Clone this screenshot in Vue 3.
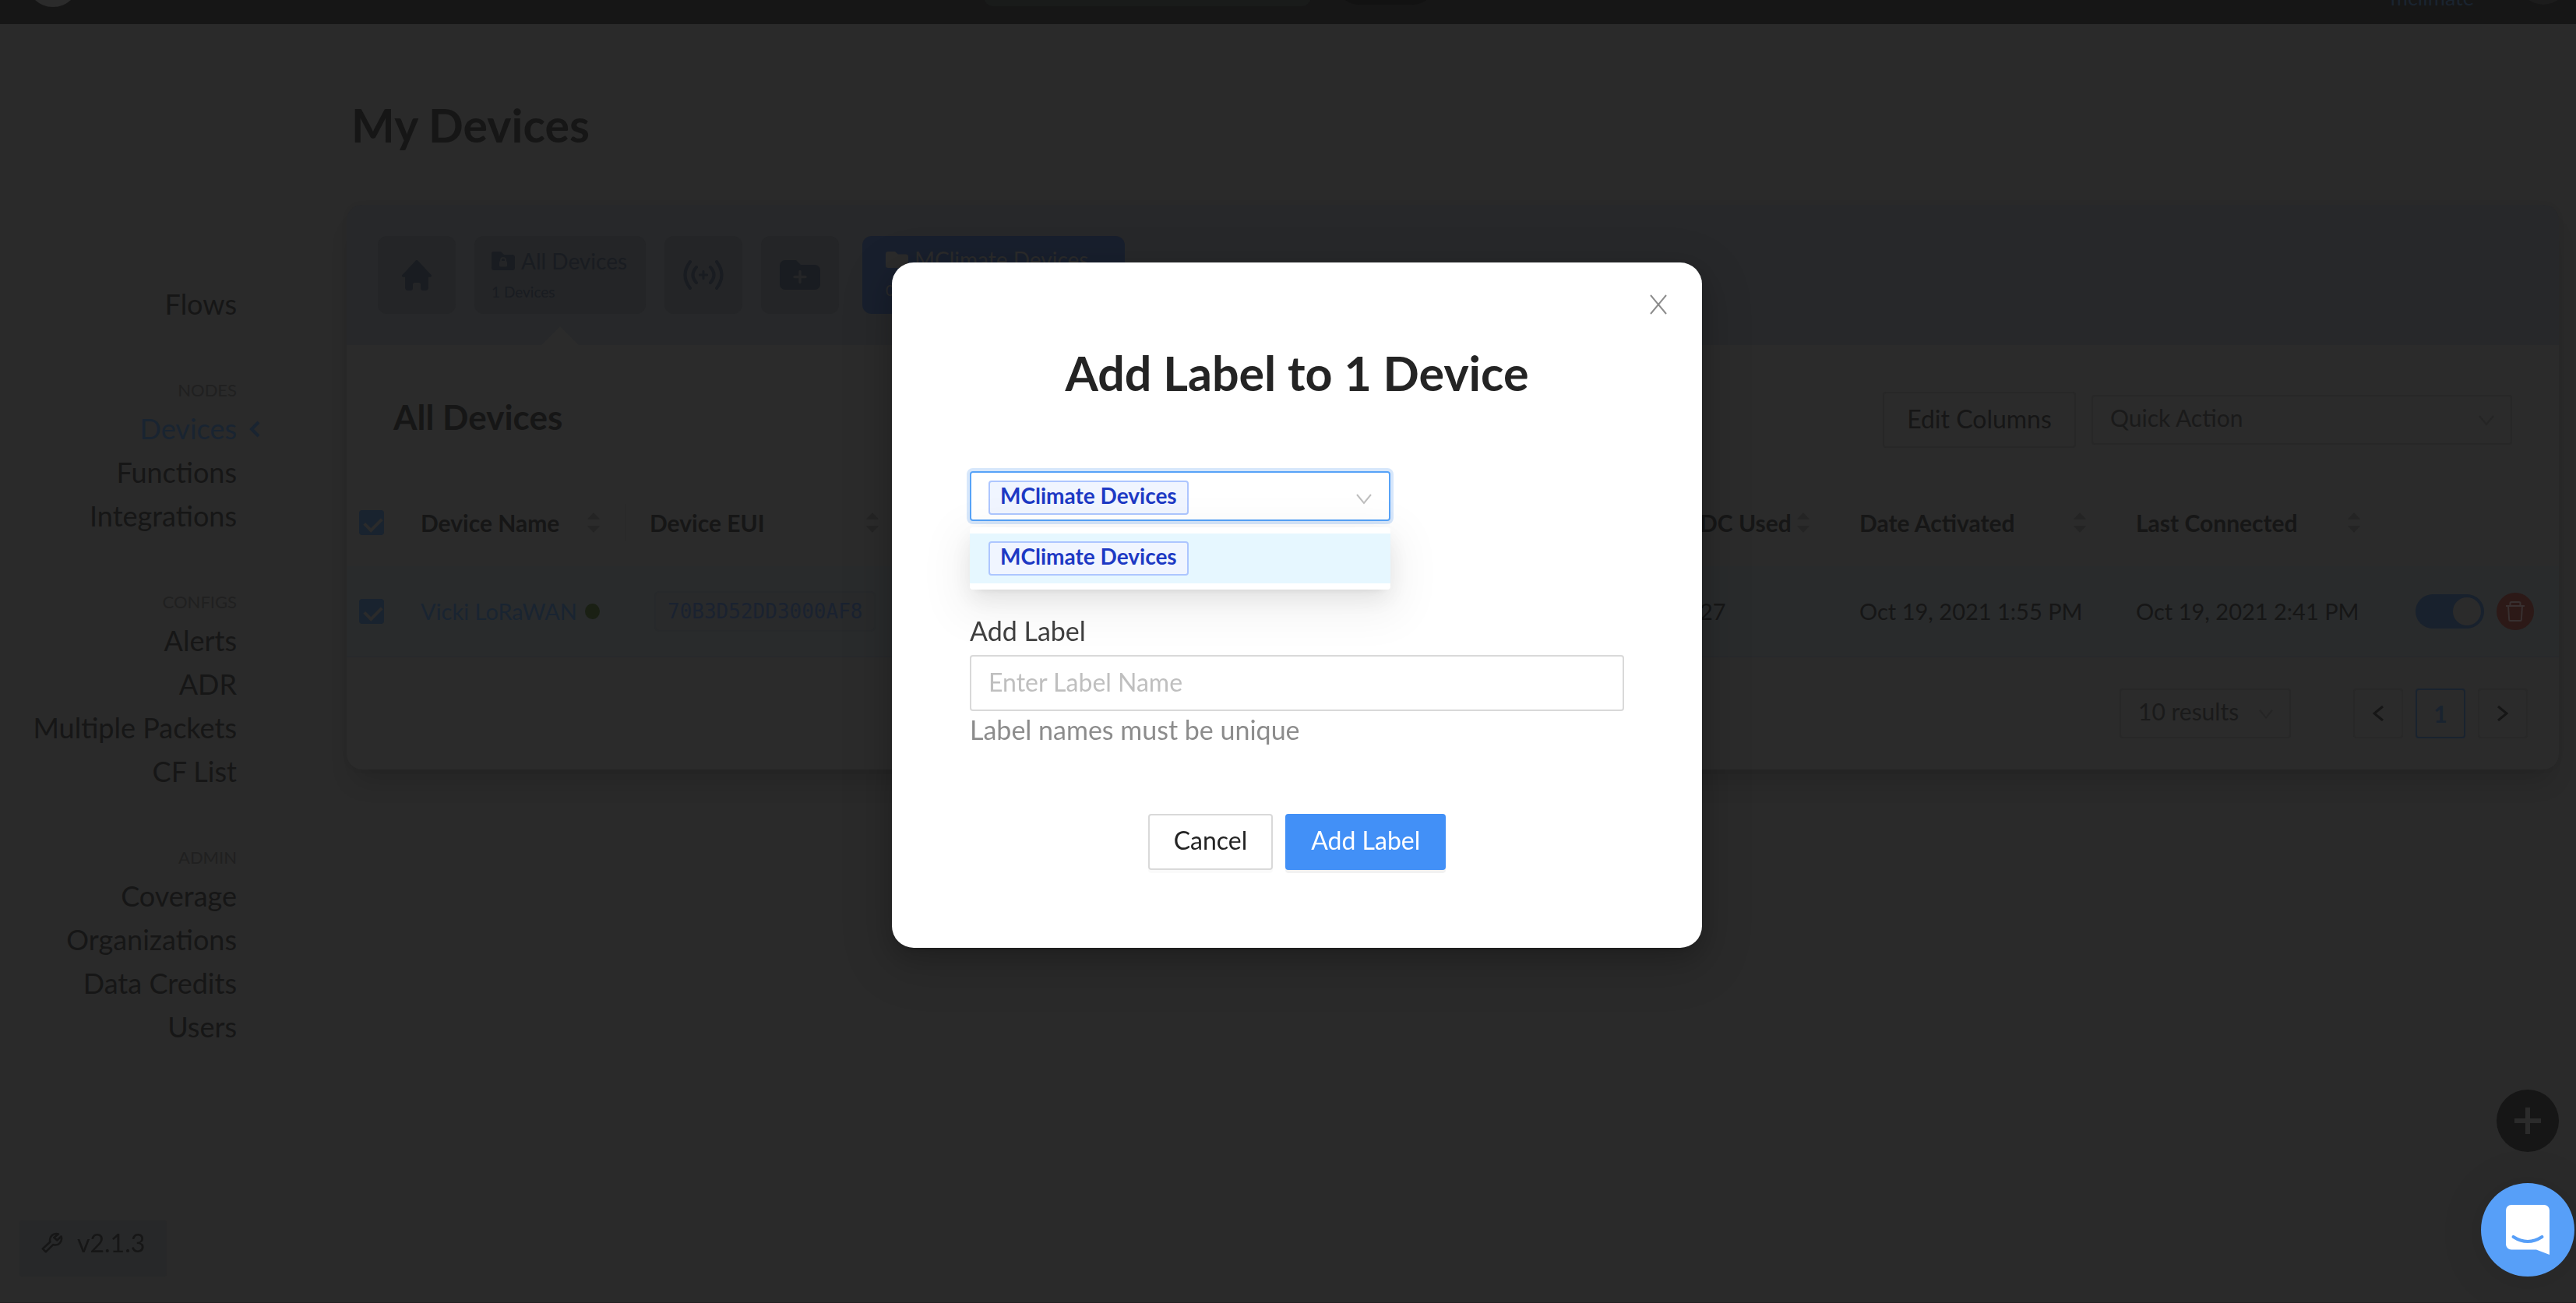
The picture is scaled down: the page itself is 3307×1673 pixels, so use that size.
<script setup>
import { ref } from 'vue'

const groups = [
  { label: '', items: ['Flows'] },
  { label: 'NODES', items: ['Devices', 'Functions', 'Integrations'] },
  { label: 'CONFIGS', items: ['Alerts', 'ADR', 'Multiple Packets', 'CF List'] },
  { label: 'ADMIN', items: ['Coverage', 'Organizations', 'Data Credits', 'Users'] },
]

const columns = [
  { key: 'name', title: 'Device Name', divided: true },
  { key: 'eui', title: 'Device EUI' },
  { key: 'spacer', title: '' },
  { key: 'dc', title: 'DC Used' },
  { key: 'activated', title: 'Date Activated' },
  { key: 'connected', title: 'Last Connected' },
]

const labels = ['MClimate Devices']
const selectedLabel = ref(labels[0])
const labelName = ref('')
</script>

<template>
  <div class="page">
    <header class="topbar">
      <span class="logo"></span>
      <span class="search"></span>
      <span class="pill"></span>
      <a href="#" class="account">mclimate</a>
      <span class="avatar"></span>
    </header>

    <div class="body">
      <nav class="sidebar">
        <section v-for="g in groups" :key="g.label" class="group">
          <h3 v-if="g.label">{{ g.label }}</h3>
          <a v-for="item in g.items" :key="item" href="#" :class="{ current: item === 'Devices' }">
            {{ item }}
            <svg v-if="item === 'Devices'" class="caret" width="14" height="22" viewBox="0 0 14 22">
              <path d="M12 2 3 11l9 9" fill="none" stroke="currentColor" stroke-width="4" />
            </svg>
          </a>
        </section>
      </nav>

      <main class="main">
        <h1>My Devices</h1>
        <div class="card">
          <div class="tabs">
            <button class="tile square" aria-label="Home">
              <svg width="40" height="40" viewBox="0 0 40 40">
                <path d="M20 1a2 2 0 0 1 1.500.7L38.500 20a1.600 1.600 0 0 1-1.200 2.700H35V36a4 4 0 0 1-4 4h-2.500a3.500 3.500 0 0 1-3.500-3.500V32a2 2 0 0 0-2-2h-6a2 2 0 0 0-2 2v4.500a3.500 3.500 0 0 1-3.500 3.500H9a4 4 0 0 1-4-4V22.700H2.700A1.600 1.600 0 0 1 1.500 20L18.500 1.700A2 2 0 0 1 20 1Z" fill="currentColor" />
              </svg>
            </button>
            <button class="tile wide active">
              <span class="tile-name">
                <svg width="30" height="24" viewBox="0 0 30 24">
                  <path d="M3 0h9l4 4h10.500A3.500 3.500 0 0 1 30 7.500v13a3.500 3.500 0 0 1-3.500 3.500h-23A3.500 3.500 0 0 1 0 20.500V3a3 3 0 0 1 3-3Z" fill="currentColor" />
                  <path d="M12 12v-1a3 3 0 0 1 6 0v1" fill="none" stroke="#242527" stroke-width="2" />
                  <rect x="10" y="12" width="10" height="7.500" rx="1.500" fill="#242527" />
                </svg>
                All Devices
              </span>
              <span class="tile-count">1 Devices</span>
            </button>
            <button class="tile square" aria-label="Add device">
              <svg width="54" height="40" viewBox="0 0 54 40" fill="none" stroke="currentColor" stroke-width="4" stroke-linecap="round">
                <path d="M10 3Q-3 20 10 37M44 3q13 17 0 34M18 10q-9 10 0 20M36 10q9 10 0 20" />
                <path d="M27 15.500v9M22.500 20h9" stroke-width="3" />
              </svg>
            </button>
            <button class="tile square" aria-label="Add label">
              <svg width="52" height="38" viewBox="0 0 52 38">
                <path d="M7 0h14l6 6h18a7 7 0 0 1 7 7v18a7 7 0 0 1-7 7H7a7 7 0 0 1-7-7V7a7 7 0 0 1 7-7Z" fill="currentColor" />
                <path d="M26 14.500v14M19 21.500h14" fill="none" stroke="#242527" stroke-width="3.500" stroke-linecap="round" />
              </svg>
            </button>
            <button class="tile label-tile">
              <span class="tile-name">
                <svg width="29" height="21" viewBox="0 0 29 21">
                  <path d="M3 0h9l4 3.500h10a3 3 0 0 1 3 3V18a3 3 0 0 1-3 3H3a3 3 0 0 1-3-3V3a3 3 0 0 1 3-3Z" fill="currentColor" />
                </svg>
                MClimate Devices
              </span>
              <span class="tile-count">0 Devices</span>
            </button>
          </div>

          <div class="card-head">
            <h2>All Devices</h2>
            <button class="edit">Edit Columns</button>
            <div class="select quick">
              <select aria-label="Quick Action">
                <option>Quick Action</option>
              </select>
              <svg width="20" height="14" viewBox="0 0 20 14">
                <path d="M1 1l9 11 9-11" fill="none" stroke="currentColor" stroke-width="2" />
              </svg>
            </div>
          </div>

          <table>
            <thead>
              <tr>
                <th class="col-check"><input type="checkbox" class="check" checked aria-label="Select all devices" /></th>
                <th v-for="c in columns" :key="c.key" :class="['col-' + c.key, { divided: c.divided }]">
                  <div v-if="c.title" class="th">
                    <span>{{ c.title }}</span>
                    <svg width="16" height="26" viewBox="0 0 16 26">
                      <path d="M8 0l8 9H0ZM8 26l8-9H0Z" fill="currentColor" />
                    </svg>
                  </div>
                </th>
                <th class="col-actions"></th>
              </tr>
            </thead>
            <tbody>
              <tr>
                <td class="col-check"><input type="checkbox" class="check" checked aria-label="Select Vicki LoRaWAN" /></td>
                <td><div class="device"><a href="#">Vicki LoRaWAN</a><span class="dot"></span></div></td>
                <td><code>70B3D52DD3000AF8</code></td>
                <td></td>
                <td>27</td>
                <td>Oct 19, 2021 1:55 PM</td>
                <td>Oct 19, 2021 2:41 PM</td>
                <td>
                  <div class="actions">
                    <input type="checkbox" role="switch" class="switch" checked aria-label="Device active" />
                    <button class="delete" aria-label="Delete device">
                      <svg width="26" height="28" viewBox="0 0 26 28" fill="none" stroke="currentColor" stroke-width="2">
                        <path d="M1 7h24M6.500 7V3.500A1.500 1.500 0 0 1 8 2h10a1.500 1.500 0 0 1 1.500 1.500V7M4 7l1.200 18a1 1 0 0 0 1 1h13.600a1 1 0 0 0 1-1L22 7" />
                      </svg>
                    </button>
                  </div>
                </td>
              </tr>
            </tbody>
          </table>

          <div class="pager">
            <div class="select size">
              <select aria-label="Results per page">
                <option>10 results</option>
              </select>
              <svg width="18" height="14" viewBox="0 0 20 14">
                <path d="M1 1l9 11 9-11" fill="none" stroke="currentColor" stroke-width="2" />
              </svg>
            </div>
            <button class="page-btn" aria-label="Previous page">
              <svg width="14" height="20" viewBox="0 0 14 20"><path d="M13 1 2 10l11 9" fill="none" stroke="currentColor" stroke-width="3" /></svg>
            </button>
            <button class="page-btn on">1</button>
            <button class="page-btn" aria-label="Next page">
              <svg width="14" height="20" viewBox="0 0 14 20"><path d="M1 1l11 9-11 9" fill="none" stroke="currentColor" stroke-width="3" /></svg>
            </button>
          </div>
        </div>
      </main>
    </div>

    <a href="#" class="version">
      <svg width="28" height="28" viewBox="0 0 28 28" fill="none" stroke="currentColor" stroke-width="2.500" stroke-linejoin="round">
        <path d="M22 3.500a8.200 8.200 0 0 0-10.600 10L1.800 22.300l4 4 9.400-9.200A8.200 8.200 0 0 0 25.500 6.500l-5.200 5-4-3.600Z" />
      </svg>
      v2.1.3
    </a>
    <button class="fab" aria-label="Add">
      <svg width="34" height="34" viewBox="0 0 34 34"><path d="M17 0v34M0 17h34" stroke="currentColor" stroke-width="6" /></svg>
    </button>

    <div class="overlay">
      <form class="modal" role="dialog" aria-labelledby="modal-title" @submit.prevent>
        <button type="button" class="close" aria-label="Close">
          <svg width="22" height="26" viewBox="0 0 22 26"><path d="M1 1l20 24M21 1 1 25" fill="none" stroke="currentColor" stroke-width="2" /></svg>
        </button>
        <h2 id="modal-title">Add Label to 1 Device</h2>
        <div class="picker">
          <button type="button" class="combo" role="combobox" aria-expanded="true" aria-controls="label-list" aria-label="Label">
            <span class="tag">{{ selectedLabel }}</span>
            <svg width="20" height="14" viewBox="0 0 20 14">
              <path d="M1 1l9 11 9-11" fill="none" stroke="currentColor" stroke-width="2" />
            </svg>
          </button>
          <ul id="label-list" class="options" role="listbox" aria-label="Labels">
            <li v-for="l in labels" :key="l" role="option" :aria-selected="l === selectedLabel" @click="selectedLabel = l">
              <span class="tag">{{ l }}</span>
            </li>
          </ul>
        </div>
        <label for="label-name">Add Label</label>
        <input id="label-name" v-model="labelName" type="text" placeholder="Enter Label Name" />
        <p>Label names must be unique</p>
        <div class="buttons">
          <button type="button" class="btn">Cancel</button>
          <button type="submit" class="btn primary">Add Label</button>
        </div>
      </form>
    </div>

    <button class="chat" aria-label="Open chat">
      <svg width="56" height="64" viewBox="0 0 56 64">
        <path d="M7 0h42a7 7 0 0 1 7 7v57l-17-6.500H7a7 7 0 0 1-7-7V7a7 7 0 0 1 7-7Z" fill="#fff" />
        <path d="M9.500 41q18.500 12 37 0" fill="none" stroke="#579ff8" stroke-width="4" stroke-linecap="round" />
      </svg>
    </button>
  </div>
</template>

<style>
body {
  background: #2a2a2a;
}
</style>

<style scoped>
.page {
  min-height: 100vh;
  box-sizing: border-box;
  border-bottom: 1px solid #221f20;
  background: #2a2a2a;
  color: #161616;
  font-family: Lato, "Liberation Sans", sans-serif;
}
.page * {
  box-sizing: border-box;
}
button,
input,
select {
  margin: 0;
  padding: 0;
  border: 0;
  background: none;
  color: inherit;
  font-family: inherit;
  appearance: none;
  outline: none;
}
a {
  color: inherit;
  text-decoration: none;
}
svg {
  display: block;
  flex: none;
}
h1,
h2,
h3,
p {
  margin: 0;
}

/* Top bar, scrolled mostly out of view */
.topbar {
  display: flex;
  align-items: flex-end;
  height: 31px;
  padding: 0 10px 0 34px;
  overflow: hidden;
  background: #161616;
}
.logo {
  width: 68px;
  height: 68px;
  margin-bottom: 22px;
  border-radius: 50%;
  background: #2b2b2b;
}
.search {
  width: 420px;
  height: 60px;
  margin: 0 32px 23px auto;
  border-radius: 12px;
  background: #191b1a;
}
.pill {
  width: 128px;
  height: 60px;
  margin: 0 auto 25px 0;
  border-radius: 30px;
  background: #121212;
}
.account {
  margin: 0 57px 18px 0;
  padding-left: 64px;
  color: #1a2430;
  font-size: 27px;
  line-height: 33px;
}
.avatar {
  width: 64px;
  height: 64px;
  margin-bottom: 25px;
  border-radius: 50%;
  background: #1c1c1c;
}

.body {
  display: flex;
}

/* Sidebar */
.sidebar {
  flex: none;
  width: 445px;
  padding: 331px 141px 0 0;
  text-align: right;
}
.group + .group {
  margin-top: 62px;
}
.group h3 {
  color: #202020;
  font-size: 22px;
  font-weight: 400;
  line-height: 42px;
}
.group a {
  position: relative;
  display: block;
  font-size: 36px;
  line-height: 56px;
}
.group .current {
  color: #192431;
}
.caret {
  position: absolute;
  left: calc(100% + 16px);
  top: 18px;
}

/* Main card */
.main {
  flex: 1;
  min-width: 0;
  padding: 90px 22px 0 0;
}
h1 {
  padding-left: 6px;
  font-size: 59px;
  font-weight: 700;
  line-height: 80px;
}
.card {
  margin-top: 62px;
  border-radius: 20px;
  background: #2b2b2b;
  box-shadow: 0 24px 32px -10px rgba(0, 0, 0, 0.14), 0 0 8px rgba(0, 0, 0, 0.04);
}
.tabs {
  display: flex;
  gap: 24px;
  padding: 40px;
  border-radius: 20px 20px 0 0;
  background: #27282a;
}
.tile {
  position: relative;
  height: 100px;
  border-radius: 12px;
  background: #242527;
  color: #191c21;
  text-align: left;
}
.square {
  display: flex;
  flex: none;
  align-items: center;
  justify-content: center;
  width: 100px;
}
.wide {
  width: 220px;
  padding: 12px 22px 8px;
}
.active::after {
  position: absolute;
  top: 116px;
  left: 50%;
  margin-left: -24px;
  border: 24px solid transparent;
  border-top-width: 0;
  border-bottom-color: #2b2b2b;
  content: "";
}
.tile-name {
  display: flex;
  align-items: center;
  gap: 8px;
  font-size: 28px;
  line-height: 40px;
  white-space: nowrap;
}
.tile-count {
  display: block;
  font-size: 19px;
  line-height: 40px;
}
.label-tile {
  width: 337px;
  margin-left: 6px;
  padding: 8px 30px;
  background: #181f2d;
  color: #2b2b2b;
}
.card-head {
  display: flex;
  align-items: center;
  gap: 20px;
  padding: 60px 60px 40px;
}
.card-head h2 {
  align-self: flex-start;
  margin-right: auto;
  font-size: 44px;
  font-weight: 700;
  line-height: 64px;
}
.edit {
  width: 248px;
  height: 72px;
  padding-bottom: 4px;
  border: 2px solid #272727;
  border-radius: 4px;
  font-size: 32px;
}
.select {
  position: relative;
  height: 64px;
}
.select select {
  width: 100%;
  height: 100%;
  padding: 0 22px 6px;
  border: 2px solid #272727;
  border-radius: 4px;
  color: #1a1a1a;
  font-size: 30px;
}
.select svg {
  position: absolute;
  top: 26px;
  right: 23px;
  color: #252525;
  pointer-events: none;
}
.quick {
  width: 540px;
}
.size {
  width: 220px;
  margin-right: 64px;
}

/* Device table */
table {
  width: 100%;
  border-collapse: collapse;
  table-layout: fixed;
  font-size: 29px;
}
th,
td {
  padding: 0 34px 0 30px;
  text-align: left;
  white-space: nowrap;
}
th {
  height: 112px;
  font-size: 30px;
  font-weight: 700;
}
td {
  height: 116px;
  border-bottom: 2px solid #27292c;
  background: #292b2c;
}
.divided {
  background: linear-gradient(#292929, #292929) right center / 2px 48px no-repeat;
}
.th {
  display: flex;
  align-items: center;
  justify-content: space-between;
}
.th svg {
  color: #242424;
}
.col-check {
  width: 65px;
  padding: 0 0 0 16px;
}
.col-name {
  width: 294px;
}
.col-eui {
  width: 358px;
}
.col-dc {
  width: 205px;
}
.col-activated {
  width: 355px;
}
.col-connected {
  width: 352px;
}
.col-actions {
  width: 221px;
}
.check {
  position: relative;
  display: block;
  width: 32px;
  height: 32px;
  border-radius: 4px;
  background: #19232f;
}
.check::after {
  position: absolute;
  top: 5px;
  left: 11px;
  width: 10px;
  height: 18px;
  border: solid #2b2b2b;
  border-width: 0 4px 4px 0;
  transform: rotate(45deg);
  content: "";
}
.device {
  display: flex;
  align-items: center;
  gap: 10px;
  color: #192431;
}
.dot {
  width: 20px;
  height: 20px;
  border-radius: 50%;
  background: #1a2014;
}
code {
  display: inline-block;
  margin-left: 6px;
  padding: 0 15px;
  border: 2px solid #27292b;
  border-radius: 6px;
  background: #292a2b;
  color: #1a2230;
  font-family: "DejaVu Sans Mono", monospace;
  font-size: 26px;
  line-height: 48px;
}
.actions {
  display: flex;
  align-items: center;
  gap: 16px;
  margin-left: 7px;
}
.switch {
  position: relative;
  width: 88px;
  height: 44px;
  border-radius: 22px;
  background: #18212d;
}
.switch::after {
  position: absolute;
  top: 4px;
  right: 4px;
  width: 36px;
  height: 36px;
  border-radius: 50%;
  background: #2b2b2b;
  content: "";
}
.delete {
  display: flex;
  align-items: center;
  justify-content: center;
  width: 48px;
  height: 48px;
  border-radius: 50%;
  background: #2c1917;
  color: #383030;
}
.col-actions,
td:last-child {
  padding-right: 0;
}
.pager {
  display: flex;
  justify-content: flex-end;
  gap: 16px;
  padding: 40px;
}
.page-btn {
  display: flex;
  align-items: center;
  justify-content: center;
  width: 64px;
  height: 64px;
  border: 2px solid #282828;
  border-radius: 4px;
  font-size: 30px;
}
.page-btn.on {
  border-color: #19232f;
  color: #19232f;
  font-weight: 700;
}

/* Floating corners */
.version {
  position: fixed;
  bottom: 34px;
  left: 25px;
  display: flex;
  gap: 18px;
  height: 72px;
  padding: 0 28px;
  border-radius: 4px;
  background: #272829;
  font-size: 32px;
  line-height: 58px;
}
.version svg {
  margin-top: 14px;
}
.fab {
  position: fixed;
  right: 22px;
  bottom: 194px;
  display: flex;
  align-items: center;
  justify-content: center;
  width: 80px;
  height: 80px;
  border-radius: 50%;
  background: #161616;
  color: #2b2b2b;
}
.chat {
  position: fixed;
  right: 2px;
  bottom: 34px;
  display: flex;
  align-items: center;
  justify-content: center;
  width: 120px;
  height: 120px;
  border-radius: 50%;
  background: #579ff8;
  box-shadow: 0 4px 60px rgba(0, 0, 0, 0.1);
}

/* Modal */
.overlay {
  position: fixed;
  inset: 0;
  display: flex;
  align-items: flex-start;
  justify-content: center;
  padding: 337px 0 0 23px;
}
.modal {
  position: relative;
  width: 1040px;
  padding: 100px;
  border-radius: 28px;
  background: #fff;
  box-shadow: 0 6px 12px -8px rgba(0, 0, 0, 0.24), 0 12px 32px rgba(0, 0, 0, 0.16), 0 18px 56px 16px rgba(0, 0, 0, 0.1);
}
.close {
  position: absolute;
  top: 41px;
  right: 45px;
  color: #8c8c8c;
}
.modal h2 {
  color: #242424;
  font-size: 61px;
  font-weight: 700;
  line-height: 84px;
  text-align: center;
}
.picker {
  position: relative;
  width: 540px;
  margin: 84px 0 112px;
}
.combo {
  display: flex;
  align-items: center;
  justify-content: space-between;
  width: 100%;
  height: 64px;
  padding: 4px 22px 0;
  border: 2px solid #57a3f8;
  border-radius: 4px;
  color: #bfbfbf;
  box-shadow: 0 0 0 4px #d7e7fb;
}
.combo svg {
  margin-top: 4px;
}
.options {
  position: absolute;
  top: 72px;
  left: 0;
  right: 0;
  margin: 0;
  padding: 8px 0;
  border-radius: 4px;
  background: #fff;
  list-style: none;
  box-shadow: 0 6px 12px -8px rgba(0, 0, 0, 0.12), 0 12px 32px rgba(0, 0, 0, 0.08), 0 18px 56px 16px rgba(0, 0, 0, 0.05);
}
.options li {
  display: flex;
  padding: 10px 24px;
  background: #e6f7ff;
}
.tag {
  height: 44px;
  padding: 0 13px;
  border: 2px solid #adc6ff;
  border-radius: 4px;
  background: #f0f5ff;
  color: #1d39c4;
  font-size: 28px;
  font-weight: 700;
  line-height: 35px;
  white-space: nowrap;
}
.modal label {
  display: block;
  color: #404040;
  font-size: 34px;
  line-height: 62px;
}
.picker + label {
  margin-top: -2px;
}
.modal input {
  display: block;
  width: 100%;
  height: 72px;
  padding: 0 22px 4px;
  border: 2px solid #d9d9d9;
  border-radius: 4px;
  color: #242424;
  font-size: 32px;
}
.modal input::placeholder {
  color: #bfbfbf;
  opacity: 1;
}
.modal p {
  color: #8c8c8c;
  font-size: 34px;
  line-height: 48px;
}
.buttons {
  display: flex;
  justify-content: center;
  gap: 16px;
  margin-top: 84px;
}
.btn {
  height: 72px;
  padding: 0 31px 6px;
  border: 2px solid #d9d9d9;
  border-radius: 4px;
  color: #242424;
  font-size: 32px;
  box-shadow: 0 4px 0 rgba(0, 0, 0, 0.02);
}
.primary {
  border-color: #4290f7;
  background: #4290f7;
  color: #fff;
  box-shadow: 0 4px 0 rgba(0, 0, 0, 0.05);
}
</style>
